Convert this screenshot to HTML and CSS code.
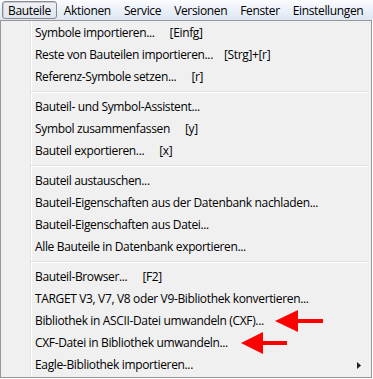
FILE: index.html
```html
<!DOCTYPE html>
<html lang="de">
<head>
<meta charset="utf-8">
<title>Bauteile-Menü</title>
<link rel="stylesheet" href="styles.css">
</head>
<body>
<div class="menubar">
  <div class="mb-item active">Bauteile</div>
  <div class="mb-item">Aktionen</div>
  <div class="mb-item">Service</div>
  <div class="mb-item">Versionen</div>
  <div class="mb-item">Fenster</div>
  <div class="mb-item">Einstellungen</div>
</div>
<div class="menu">
  <div class="item">Symbole importieren...<span class="key">[Einfg]</span></div>
  <div class="item">Reste von Bauteilen importieren...<span class="key tight">[Strg]+[r]</span></div>
  <div class="item">Referenz-Symbole setzen...<span class="key">[r]</span></div>
  <div class="sep"></div>
  <div class="item">Bauteil- und Symbol-Assistent...</div>
  <div class="item">Symbol zusammenfassen<span class="key">[y]</span></div>
  <div class="item">Bauteil exportieren...<span class="key">[x]</span></div>
  <div class="sep"></div>
  <div class="item">Bauteil austauschen...</div>
  <div class="item">Bauteil-Eigenschaften aus der Datenbank nachladen...</div>
  <div class="item">Bauteil-Eigenschaften aus Datei...</div>
  <div class="item">Alle Bauteile in Datenbank exportieren...</div>
  <div class="sep"></div>
  <div class="item">Bauteil-Browser...<span class="key">[F2]</span></div>
  <div class="item">TARGET V3, V7, V8 oder V9-Bibliothek konvertieren...</div>
  <div class="item">Bibliothek in ASCII-Datei umwandeln (CXF)...</div>
  <div class="item">CXF-Datei in Bibliothek umwandeln...</div>
  <div class="item">Eagle-Bibliothek importieren...<svg class="sub-arrow" width="4" height="7" viewBox="0 0 4 7"><polygon points="0,0 4,3.5 0,7" fill="#222"/></svg></div>
</div>
<svg class="arrows" width="373" height="379" viewBox="0 0 373 379">
  <polygon points="275,321 298,310 298,319 323,319 323,323 298,323 298,332" fill="#ff0000"/>
  <polygon points="241,343 263,332 263,341 287,341 287,345 263,345 263,354" fill="#ff0000"/>
</svg>
</body>
</html>
```

FILE: styles.css
```css
html, body {
  margin: 0;
  padding: 0;
}

body {
  width: 373px;
  height: 379px;
  background: #ffffff;
  font-family: "Open Sans", "Noto Sans", sans-serif;
  font-size: 12px;
  letter-spacing: -0.35px;
  color: #000;
  position: relative;
  overflow: hidden;
}

.menubar {
  height: 20px;
  display: flex;
  align-items: center;
  padding-left: 2px;
  background: linear-gradient(#fbfcfe 0%, #edf2f9 45%, #dde6f2 100%);
  white-space: nowrap;
}

.mb-item {
  height: 18px;
  line-height: 17px;
  padding: 0 5px;
  box-sizing: border-box;
  border: 1px solid transparent;
  border-radius: 3px;
  margin-right: 1px;
}

.mb-item.active {
  border-color: #878a8f;
  background: linear-gradient(#eef1f5, #e1e6ed);
  box-shadow: inset 1px 1px 0 #c9ced6;
}

.menu {
  width: 372px;
  height: 358px;
  box-sizing: border-box;
  border: 1px solid #979797;
  padding: 1px 0;
  background:
    linear-gradient(to right,
      #f0f0f0 0, #f0f0f0 29px,
      #e2e3e3 29px, #e2e3e3 30px,
      #ffffff 30px, #ffffff 31px,
      #f0f0f0 31px);
}

.item {
  height: 22px;
  line-height: 22px;
  padding-left: 34px;
  display: flex;
  align-items: center;
  white-space: nowrap;
}

.key {
  margin-left: 15px;
}

.key.tight {
  margin-left: 11px;
}

.sep {
  height: 8px;
  margin-left: 30px;
  margin-right: 2px;
  background: linear-gradient(transparent 0, transparent 3px, #e0e0e0 3px, #e0e0e0 4px, #ffffff 4px, #ffffff 5px, transparent 5px);
}

.sub-arrow {
  margin-left: auto;
  margin-right: 10px;
}

.arrows {
  position: absolute;
  left: 0;
  top: 0;
  pointer-events: none;
}
```
